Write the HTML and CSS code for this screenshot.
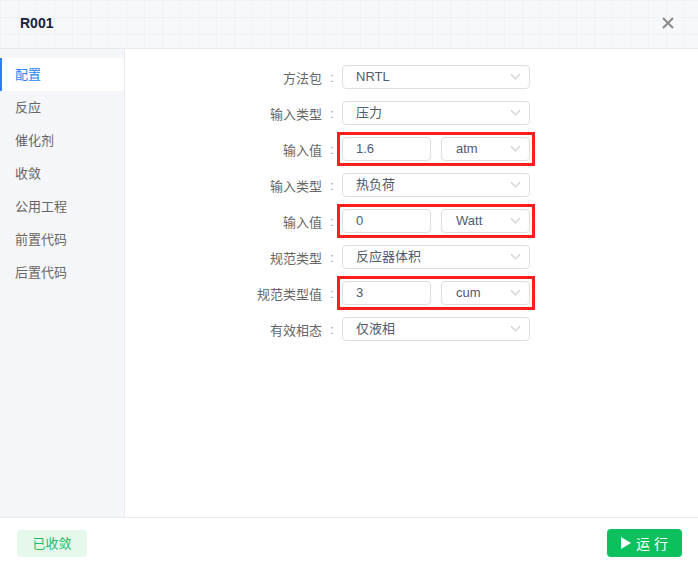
FILE: index.html
```html
<!DOCTYPE html>
<html lang="zh-CN">
<head>
    <meta charset="UTF-8">
    <meta name="viewport" content="width=device-width, initial-scale=1.0">
    <title>R001</title>
    <link rel="stylesheet" href="styles.css">
</head>
<body>
    <div class="dialog">
        <div class="header">
            <span class="title">R001</span>
            <span class="close">
                <svg width="12" height="12" viewBox="0 0 12 12"><path d="M1 1L11 11M11 1L1 11" stroke="#8a8a8a" stroke-width="2" fill="none"/></svg>
            </span>
        </div>
        <div class="body">
            <ul class="menu">
                <li class="active">配置</li>
                <li>反应</li>
                <li>催化剂</li>
                <li>收敛</li>
                <li>公用工程</li>
                <li>前置代码</li>
                <li>后置代码</li>
            </ul>
            <div class="form">
                <div class="row">
                    <label>方法包</label><span class="colon">:</span>
                    <div class="select">NRTL<i class="arrow"></i></div>
                </div>
                <div class="row">
                    <label>输入类型</label><span class="colon">:</span>
                    <div class="select">压力<i class="arrow"></i></div>
                </div>
                <div class="row">
                    <label>输入值</label><span class="colon">:</span>
                    <div class="pair marked">
                        <div class="input">1.6</div>
                        <div class="select unit">atm<i class="arrow"></i></div>
                    </div>
                </div>
                <div class="row">
                    <label>输入类型</label><span class="colon">:</span>
                    <div class="select">热负荷<i class="arrow"></i></div>
                </div>
                <div class="row">
                    <label>输入值</label><span class="colon">:</span>
                    <div class="pair marked">
                        <div class="input">0</div>
                        <div class="select unit">Watt<i class="arrow"></i></div>
                    </div>
                </div>
                <div class="row">
                    <label>规范类型</label><span class="colon">:</span>
                    <div class="select">反应器体积<i class="arrow"></i></div>
                </div>
                <div class="row">
                    <label>规范类型值</label><span class="colon">:</span>
                    <div class="pair marked">
                        <div class="input">3</div>
                        <div class="select unit">cum<i class="arrow"></i></div>
                    </div>
                </div>
                <div class="row">
                    <label>有效相态</label><span class="colon">:</span>
                    <div class="select">仅液相<i class="arrow"></i></div>
                </div>
            </div>
        </div>
        <div class="footer">
            <span class="tag">已收敛</span>
            <button class="run"><svg width="10" height="12" viewBox="0 0 10 12"><path d="M0 0L10 6L0 12Z" fill="#fff"/></svg><span>运 行</span></button>
        </div>
    </div>
</body>
</html>
```

FILE: styles.css
```css
* {
    box-sizing: border-box;
}
body {
    margin: 0;
    font-family: "Liberation Sans", "Noto Sans CJK SC", sans-serif;
    font-size: 13px;
    color: #515a6e;
    background: #fff;
}
.dialog {
    width: 698px;
    height: 568px;
    display: flex;
    flex-direction: column;
}
.header {
    height: 49px;
    flex: none;
    display: flex;
    align-items: center;
    justify-content: space-between;
    padding: 0 24px 3px 20px;
    border-bottom: 1px solid #e8eaec;
    background-color: #f7f8fa;
    background-image:
        linear-gradient(to right, rgba(0, 0, 0, 0.022) 1px, transparent 1px),
        linear-gradient(to bottom, rgba(0, 0, 0, 0.022) 1px, transparent 1px);
    background-size: 18px 17px;
}
.title {
    font-size: 14px;
    font-weight: bold;
    color: #17233d;
}
.close {
    display: flex;
    width: 12px;
    height: 12px;
}
.body {
    flex: 1;
    display: flex;
    min-height: 0;
}
.menu {
    width: 125px;
    flex: none;
    margin: 0;
    padding: 9px 0 0;
    list-style: none;
    background: #f5f6fa;
    border-right: 1px solid #e8eaec;
}
.menu li {
    height: 33px;
    line-height: 33px;
    padding-left: 15px;
    color: #666;
}
.menu li.active {
    background: #fff;
    color: #2d7ff9;
    border-left: 2px solid #2d7ff9;
    padding-left: 13px;
}
.form {
    flex: 1;
    padding-top: 16px;
    display: flex;
    flex-direction: column;
    gap: 12px;
}
.row {
    display: flex;
    align-items: center;
    height: 24px;
}
.row label {
    width: 197px;
    text-align: right;
    color: #666;
}
.colon {
    width: 20px;
    text-align: center;
    color: #999;
}
.select,
.input {
    position: relative;
    width: 188px;
    height: 24px;
    line-height: 22px;
    padding-left: 13px;
    border: 1px solid #dcdee2;
    border-radius: 4px;
    color: #515a6e;
    background: #fff;
}
.arrow {
    position: absolute;
    right: 10px;
    top: 5px;
    width: 7px;
    height: 7px;
    border-right: 1px solid #c5c8ce;
    border-bottom: 1px solid #c5c8ce;
    transform: rotate(45deg);
}
.pair {
    display: flex;
    gap: 10px;
    width: 188px;
}
.pair .input {
    width: 89px;
}
.pair .unit {
    width: 89px;
    padding-left: 14px;
}
.marked {
    outline: 3px solid #fa1e1e;
    outline-offset: 2px;
}
.footer {
    height: 51px;
    flex: none;
    border-top: 1px solid #e8eaec;
    display: flex;
    align-items: center;
    justify-content: space-between;
    padding: 0 17px 0 17px;
}
.tag {
    width: 70px;
    height: 27px;
    line-height: 27px;
    text-align: center;
    border-radius: 4px;
    background: #e6f8ec;
    color: #19be6b;
    font-size: 13px;
}
.run {
    width: 75px;
    height: 28px;
    border: none;
    border-radius: 4px;
    background: #0cc05d;
    color: #fff;
    font-family: inherit;
    font-size: 14px;
    display: flex;
    align-items: center;
    justify-content: center;
    gap: 5px;
    margin-right: -1px;
}
```
